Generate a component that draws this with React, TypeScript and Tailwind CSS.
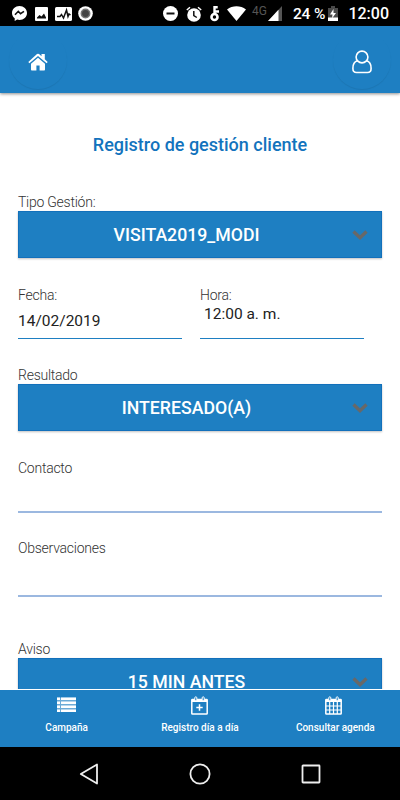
import { useState } from "react";
import clsx from "clsx";

interface SelectFieldProps {
  label: string;
  value: string;
  className?: string;
}

interface NavItemProps {
  label: string;
  labelClassName?: string;
  children: React.ReactNode;
}

const labelClass = "block h-[17px] text-[14px] font-light leading-[17px] tracking-[-0.25px] text-[#333]";

function StatusBar() {
  return (
    <div className="flex h-[26px] shrink-0 items-center bg-black pl-3 pr-[11px] pt-px text-white">
      {/* Notifications */}
      <svg width="15" height="15" viewBox="0 0 15 15">
        <path
          d="M7.5 0C3.3 0 0 3 0 6.9c0 2.2 1 4 2.7 5.3V15l2.5-1.4c.7.2 1.5.3 2.3.3 4.2 0 7.5-3.1 7.5-7S11.700 0 7.500 0z"
          fill="#fff"
        />
        <path d="M3 8.800 6.300 5.300 8.500 7.700 12 5.300" fill="none" stroke="#111" strokeWidth="1.600" />
      </svg>
      <svg className="ml-2" width="13" height="14" viewBox="0 0 13 14">
        <rect width="13" height="14" rx="1" fill="#fff" />
        <path d="M2 11.500v-1l2.500-2.500 2 1.500 2.500-3 2 4v1z" fill="#111" />
      </svg>
      <svg className="ml-[7px]" width="17" height="14" viewBox="0 0 17 14">
        <rect width="17" height="14" rx="1.500" fill="#fff" />
        <path
          d="M2 9.500h3l1.500-2L8.500 11 11.500 3l1.500 6.500 1-2.500 1.500 1"
          fill="none"
          stroke="#111"
          strokeWidth="1.500"
        />
      </svg>
      <svg className="ml-1.5" width="15" height="15" viewBox="0 0 15 15">
        <circle cx="7.500" cy="7.500" r="7.300" fill="#fff" />
        <circle cx="7.500" cy="7.500" r="4.200" fill="#444" stroke="#777" strokeWidth="1.500" />
      </svg>

      {/* System */}
      <svg className="ml-auto" width="15" height="15" viewBox="0 0 15 15">
        <circle cx="7.500" cy="7.500" r="7.500" fill="#fff" />
        <path d="M3.500 6.500h8v2h-8z" fill="#111" />
      </svg>
      <svg className="ml-2" width="16" height="16" viewBox="0 0 16 16">
        <circle cx="8" cy="9" r="6.800" fill="#fff" />
        <path d="M.8 4 4 1.200M15.200 4 12 1.200" stroke="#fff" strokeWidth="1.500" />
        <path d="M7.800 5v4.500l3 2" fill="none" stroke="#111" strokeWidth="1.500" />
      </svg>
      <svg className="ml-2" width="10" height="17" viewBox="0 0 10 17">
        <circle cx="4.500" cy="12" r="3" fill="none" stroke="#fff" strokeWidth="2.600" />
        <path d="M4.500 9V1M4.500 2.200h3.200M4.500 6.500H9" fill="none" stroke="#fff" strokeWidth="2.400" />
      </svg>
      <svg className="ml-[7px]" width="19" height="15" viewBox="0 0 19 15">
        <path d="M0 3.500C5.500-.8 13.500-.8 19 3.500L9.500 15z" fill="#fff" />
      </svg>
      <span className="-mt-1.5 ml-[6px] text-[12px] leading-3 text-[#555]">4G</span>
      <svg className="ml-px" width="14" height="15" viewBox="0 0 14 15">
        <path d="M14 0v15H0z" fill="#555" />
        <path d="M10.500 3.800V15H0z" fill="#fff" />
      </svg>
      <span className="ml-[11px] mt-px text-[15.500px] font-medium leading-5 tracking-[-0.1px]">24 %</span>
      <svg className="ml-[3px]" width="10" height="15" viewBox="0 0 10 15">
        <path d="M0 2h3V0h4v2h3v10H0z" fill="#4a4a4a" />
        <path d="M0 11.500h10V15H0z" fill="#fff" />
        <path d="M5.500 3 2 8.500h2.500L4 12.500 8 7H5.500z" fill="#fff" />
      </svg>
      <span className="ml-[10px] mt-px text-[16px] font-medium leading-5">12:00</span>
    </div>
  );
}

function Header() {
  return (
    <header className="z-10 flex h-[67px] shrink-0 items-end justify-between bg-[#1e7fc2] px-[9px] pb-1 shadow-[0_1px_3px_rgba(0,0,0,0.45)]">
      <button
        aria-label="Inicio"
        className="flex size-[58px] items-center justify-center rounded-full pt-1 shadow-[0_1px_1px_rgba(0,0,0,0.08)]"
      >
        <svg width="20" height="18" viewBox="0 0 20 17" fill="#fff" preserveAspectRatio="none">
          <path d="M10 4.500 17 10.200v5.500q0 .8-.8.8h-4.600v-4.800H8.400v4.800H3.800q-.8 0-.8-.8v-5.500z" />
          <path d="M.3 8.400 9 1q1-.8 2 0l2.500 2.100V.9h3.300v4.900l2.900 2.600-1.100 1.300L10 2.900 1.400 9.700z" />
        </svg>
      </button>
      <button
        aria-label="Perfil"
        className="flex size-[58px] items-center justify-center rounded-full pt-[3px] shadow-[0_1px_1px_rgba(0,0,0,0.08)]"
      >
        <svg width="20" height="24" viewBox="0 0 20 24" fill="none" stroke="#fff" strokeWidth="1.600">
          <circle cx="10" cy="7" r="5.900" />
          <path d="M5.500 10.800C2 11.500.9 14.800.9 18.500c0 2.500 1.400 4 3.600 4h11c2.200 0 3.600-1.500 3.600-4 0-3.700-1.100-7-4.600-7.700" />
        </svg>
      </button>
    </header>
  );
}

function SelectField({ label, value, className }: SelectFieldProps) {
  return (
    <div className={className}>
      <label className={labelClass}>{label}</label>
      <button className="flex h-[47px] w-full items-center border border-[#1270bb] bg-[#1e7fc2] pr-3 text-white shadow-[0_1px_2px_rgba(0,0,0,0.25)]">
        <span className="flex-1 pl-[3px] text-center text-[17.700px] font-medium leading-6">{value}</span>
        <svg className="mt-px" width="18" height="12" viewBox="0 0 18 12" fill="none">
          <path d="M2.500 2.500 9 8.700l6.500-6.200" stroke="#686868" strokeWidth="3.400" />
        </svg>
      </button>
    </div>
  );
}

function NavItem({ label, labelClassName, children }: NavItemProps) {
  return (
    <button className="flex w-[134px] flex-col items-center pt-[6px] text-white">
      {children}
      <span className={clsx("mt-[7px] text-[10px] font-medium leading-3", labelClassName)}>{label}</span>
    </button>
  );
}

export default function App() {
  const [contact, setContact] = useState("");
  const [notes, setNotes] = useState("");

  const inputClass = "block w-full border-b-2 border-[#9bb8e0] bg-transparent outline-none";

  return (
    <div className="flex h-[800px] w-[400px] flex-col overflow-hidden bg-white font-['Roboto',sans-serif]">
      <StatusBar />
      <Header />

      {/* Form */}
      <main className="min-h-0 flex-1 overflow-hidden px-[18px]">
        <h1 className="mt-10 text-center text-[18px] font-medium leading-6 text-[#1273bd]">
          Registro de gestión cliente
        </h1>

        <SelectField className="mt-[37px]" label="Tipo Gestión:" value="VISITA2019_MODI" />

        <div className="mt-[29px] flex gap-[18px]">
          <div className="w-[164px]">
            <label className={labelClass}>Fecha:</label>
            <div className="h-[35px] border-b border-[#1e7fc2] pt-[7px] text-[15.500px] leading-5 text-[#222]">
              14/02/2019
            </div>
          </div>
          <div className="w-[164px]">
            <label className={labelClass}>Hora:</label>
            <div className="h-[35px] border-b border-[#1e7fc2] pl-[4px] text-[15.500px] leading-5 text-[#222]">
              12:00 a. m.
            </div>
          </div>
        </div>

        <SelectField className="mt-[28px]" label="Resultado" value="INTERESADO(A)" />

        <div className="mt-[29px]">
          <label className={labelClass}>Contacto</label>
          <input
            className={clsx(inputClass, "h-9")}
            value={contact}
            onChange={(e) => setContact(e.target.value)}
          />
        </div>

        <div className="mt-[27px]">
          <label className={labelClass}>Observaciones</label>
          <input
            className={clsx(inputClass, "h-10")}
            value={notes}
            onChange={(e) => setNotes(e.target.value)}
          />
        </div>

        <SelectField className="mt-[44px]" label="Aviso" value="15 MIN ANTES" />
      </main>

      {/* Tabs */}
      <nav className="flex h-[58px] shrink-0 justify-between border-t border-white bg-[#1e7fc2]">
        <NavItem label="Campaña">
          <svg width="19" height="19" viewBox="0 0 19 19" fill="#fff">
            <path d="M0 1.500h3V4H0zM4 1.500h15V4H4zM0 5.500h3V8H0zM4 5.500h15V8H4zM0 9.500h3V12H0zM4 9.500h15V12H4zM0 13.500h3V16H0zM4 13.500h15V16H4z" />
            <path d="M0 1.500h19v14.500H0z" fillOpacity=".35" />
          </svg>
        </NavItem>
        <NavItem label="Registro día a día">
          <svg width="17" height="19" viewBox="0 0 17 19" fill="none" stroke="#fff">
            <rect x=".8" y="3.500" width="15.400" height="14.500" rx=".6" strokeWidth="1.500" />
            <path d="M1 4.500h15" strokeWidth="3" />
            <rect x="3.800" y=".8" width="2" height="4" rx="1" fill="#1e7fc2" />
            <rect x="11.200" y=".8" width="2" height="4" rx="1" fill="#1e7fc2" />
            <path d="M8.500 8.300v6.400M5.300 11.500h6.400" strokeWidth="1.500" />
          </svg>
        </NavItem>
        <NavItem label="Consultar agenda" labelClassName="pl-1">
          <svg width="17" height="19" viewBox="0 0 17 19" fill="none" stroke="#fff">
            <rect x=".8" y="3.500" width="15.400" height="14.500" rx=".6" strokeWidth="1.500" />
            <path d="M1 4.500h15" strokeWidth="3" />
            <rect x="3.800" y=".8" width="2" height="4" rx="1" fill="#1e7fc2" />
            <rect x="11.200" y=".8" width="2" height="4" rx="1" fill="#1e7fc2" />
            <path d="M4.700 6v12M8.500 6v12M12.300 6v12M1 10h15M1 14h15" strokeWidth="1.200" />
          </svg>
        </NavItem>
      </nav>

      {/* Android navigation keys */}
      <div className="flex h-[53px] shrink-0 items-center justify-between bg-black px-[79px]">
        <svg width="20" height="22" viewBox="0 0 20 22" fill="none" stroke="#eee" strokeWidth="1.800">
          <path d="M18 1.500v19L1.800 11z" strokeLinejoin="round" />
        </svg>
        <svg width="22" height="22" viewBox="0 0 22 22" fill="none" stroke="#eee" strokeWidth="1.800">
          <circle cx="11" cy="11" r="9.600" />
        </svg>
        <svg width="20" height="20" viewBox="0 0 20 20" fill="none" stroke="#eee" strokeWidth="1.800">
          <rect x="1.500" y="1.500" width="17" height="17" rx=".5" />
        </svg>
      </div>
    </div>
  );
}
